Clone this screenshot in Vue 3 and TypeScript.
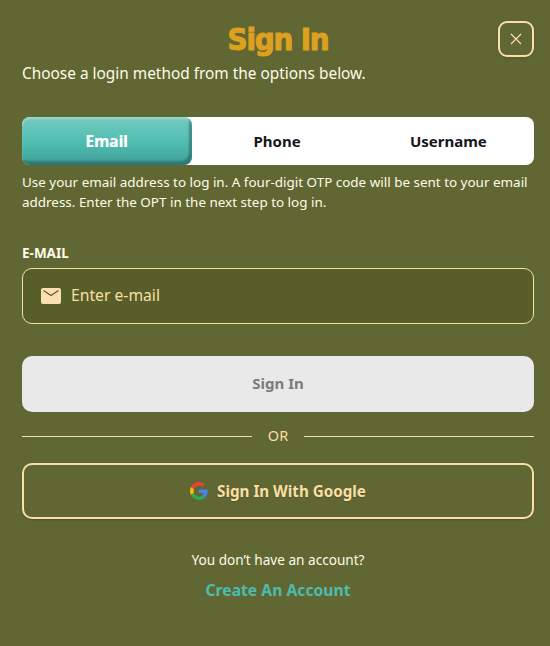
<script setup lang="ts">
const tabs: string[] = ['Email', 'Phone', 'Username']
</script>

<template>
  <main class="page">
    <header class="head">
      <h1 class="title">Sign In</h1>
      <button class="close" aria-label="Close">
        <svg width="12" height="12" viewBox="0 0 12 12"><path d="M1 1l10 10M11 1L1 11" stroke="#f8dfa6" stroke-width="1.2" fill="none" /></svg>
      </button>
    </header>
    <p class="lead">Choose a login method from the options below.</p>
    <div class="tabs">
      <button v-for="(t, i) in tabs" :key="t" class="tab" :class="{ active: i === 0 }">{{ t }}</button>
    </div>
    <p class="help">Use your email address to log in. A four-digit OTP code will be sent to your email address. Enter the OPT in the next step to log in.</p>
    <label class="label">E-MAIL</label>
    <div class="field">
      <svg class="mail" width="20" height="16" viewBox="0 0 20 16">
        <rect width="20" height="16" rx="2" fill="#fbdfb0" />
        <path d="M2.500 2.500 10 7.500l7.500-5" stroke="#5a5f28" stroke-width="1.200" fill="none" />
      </svg>
      <span class="placeholder">Enter e-mail</span>
    </div>
    <button class="submit">Sign In</button>
    <div class="or"><span class="rule"></span><span class="or-text">OR</span><span class="rule"></span></div>
    <button class="google">
      <svg width="18" height="18" viewBox="0 0 48 48">
        <path fill="#EA4335" d="M24 9.500c3.500 0 6.700 1.300 9.100 3.500l6.800-6.800C35.800 2.400 30.200 0 24 0 14.600 0 6.500 5.400 2.600 13.200l7.900 6.100C12.400 13.600 17.700 9.500 24 9.500z" />
        <path fill="#4285F4" d="M46.900 24.500c0-1.600-.1-3.100-.4-4.500H24v9h12.900c-.6 3-2.200 5.500-4.700 7.200l7.700 6c4.500-4.200 7-10.300 7-17.700z" />
        <path fill="#FBBC05" d="M10.500 28.700c-.5-1.500-.8-3-.8-4.700s.3-3.200.8-4.700l-7.900-6.100C.9 16.500 0 20.100 0 24s.9 7.500 2.600 10.800l7.900-6.100z" />
        <path fill="#34A853" d="M24 48c6.500 0 11.900-2.100 15.900-5.800l-7.700-6c-2.200 1.400-4.900 2.300-8.200 2.300-6.300 0-11.600-4.200-13.500-9.800l-7.900 6.100C6.500 42.600 14.600 48 24 48z" />
      </svg>
      <span>Sign In With Google</span>
    </button>
    <p class="account">You don’t have an account?</p>
    <a class="create">Create An Account</a>
  </main>
</template>

<style>
html, body { margin: 0; background: #606733; }
</style>

<style scoped>
.page {
  box-sizing: border-box;
  width: 550px;
  height: 646px;
  padding: 20px 16px 0 22px;
  background: #606733;
  font-family: "Noto Sans", sans-serif;
  color: #fffbe6;
  display: flex;
  flex-direction: column;
}
button { font-family: inherit; cursor: pointer; }
p { margin: 0; }
.head { display: flex; justify-content: center; position: relative; height: 38px; }
.title {
  margin: 0;
  font-family: "DejaVu Sans Condensed", "DejaVu Sans", sans-serif;
  font-stretch: condensed;
  font-weight: 700;
  font-size: 31px;
  line-height: 38px;
  letter-spacing: -1.2px;
  color: #dea11f;
  -webkit-text-stroke: 1px #dea11f;
}
.close {
  position: absolute;
  right: 0;
  top: 1px;
  width: 36px;
  height: 36px;
  padding: 0;
  border: 2px solid #f8dfa6;
  border-radius: 9px;
  background: transparent;
  display: flex;
  align-items: center;
  justify-content: center;
  box-shadow: 0 1px 3px rgba(60, 60, 20, 0.4);
}
.lead { font-size: 15.400px; line-height: 22px; margin-top: 5px; }
.tabs {
  display: flex;
  margin-top: 32px;
  height: 48px;
  background: #fff;
  border-radius: 8px;
}
.tab {
  flex: 1;
  border: 0;
  background: transparent;
  font-size: 15px;
  font-weight: 700;
  color: #15161c;
  padding: 0;
}
.tab.active {
  flex: 0 0 169.500px;
  border-radius: 8px;
  color: #fff;
  font-size: 15.500px;
  background: linear-gradient(#74cbc0, #4fbcb0 55%, #3f9e96);
  box-shadow: inset 0 2px 2px rgba(255,255,255,.25), inset -3px -4px 2px rgba(30,90,90,.55);
  text-shadow: 0 0 1px rgba(255,255,255,.6);
}
.help { font-size: 13.450px; line-height: 20px; margin-top: 7px; }
.label { font-size: 13.500px; font-weight: 700; line-height: 18px; margin-top: 32px; }
.field {
  box-sizing: border-box;
  display: flex;
  align-items: center;
  gap: 10px;
  height: 56px;
  margin-top: 6px;
  padding-left: 18px;
  border: 1px solid #f8dfa6;
  border-radius: 10px;
  background: #585e28;
}
.placeholder { font-size: 15.700px; color: #f8dfa6; padding-bottom: 2px; }
.submit {
  height: 56px;
  margin-top: 32px;
  padding: 0 0 2px;
  border: 0;
  border-radius: 10px;
  background: #e9e9e9;
  color: #7b7b7b;
  font-size: 15px;
  font-weight: 700;
}
.or { display: flex; align-items: center; gap: 16px; height: 22px; margin-top: 13px; }
.rule { flex: 1; height: 1px; background: #f8dfa6; }
.or-text { font-size: 14.500px; color: #f8dfa6; padding-bottom: 2px; }
.google {
  height: 56px;
  margin-top: 16px;
  border: 2px solid #f8dfa6;
  border-radius: 10px;
  background: transparent;
  color: #f8dfa6;
  font-size: 15.200px;
  font-weight: 700;
  display: flex;
  align-items: center;
  justify-content: center;
  gap: 9px;
  box-shadow: 0 1px 2px rgba(60, 60, 20, 0.4);
  text-shadow: 0 1px 1px rgba(60, 60, 20, 0.4);
}
.account { font-size: 13.600px; line-height: 20px; text-align: center; margin-top: 31px; }
.create { font-size: 15.700px; font-weight: 700; line-height: 22px; text-align: center; color: #4dbcae; margin-top: 9px; }
</style>
